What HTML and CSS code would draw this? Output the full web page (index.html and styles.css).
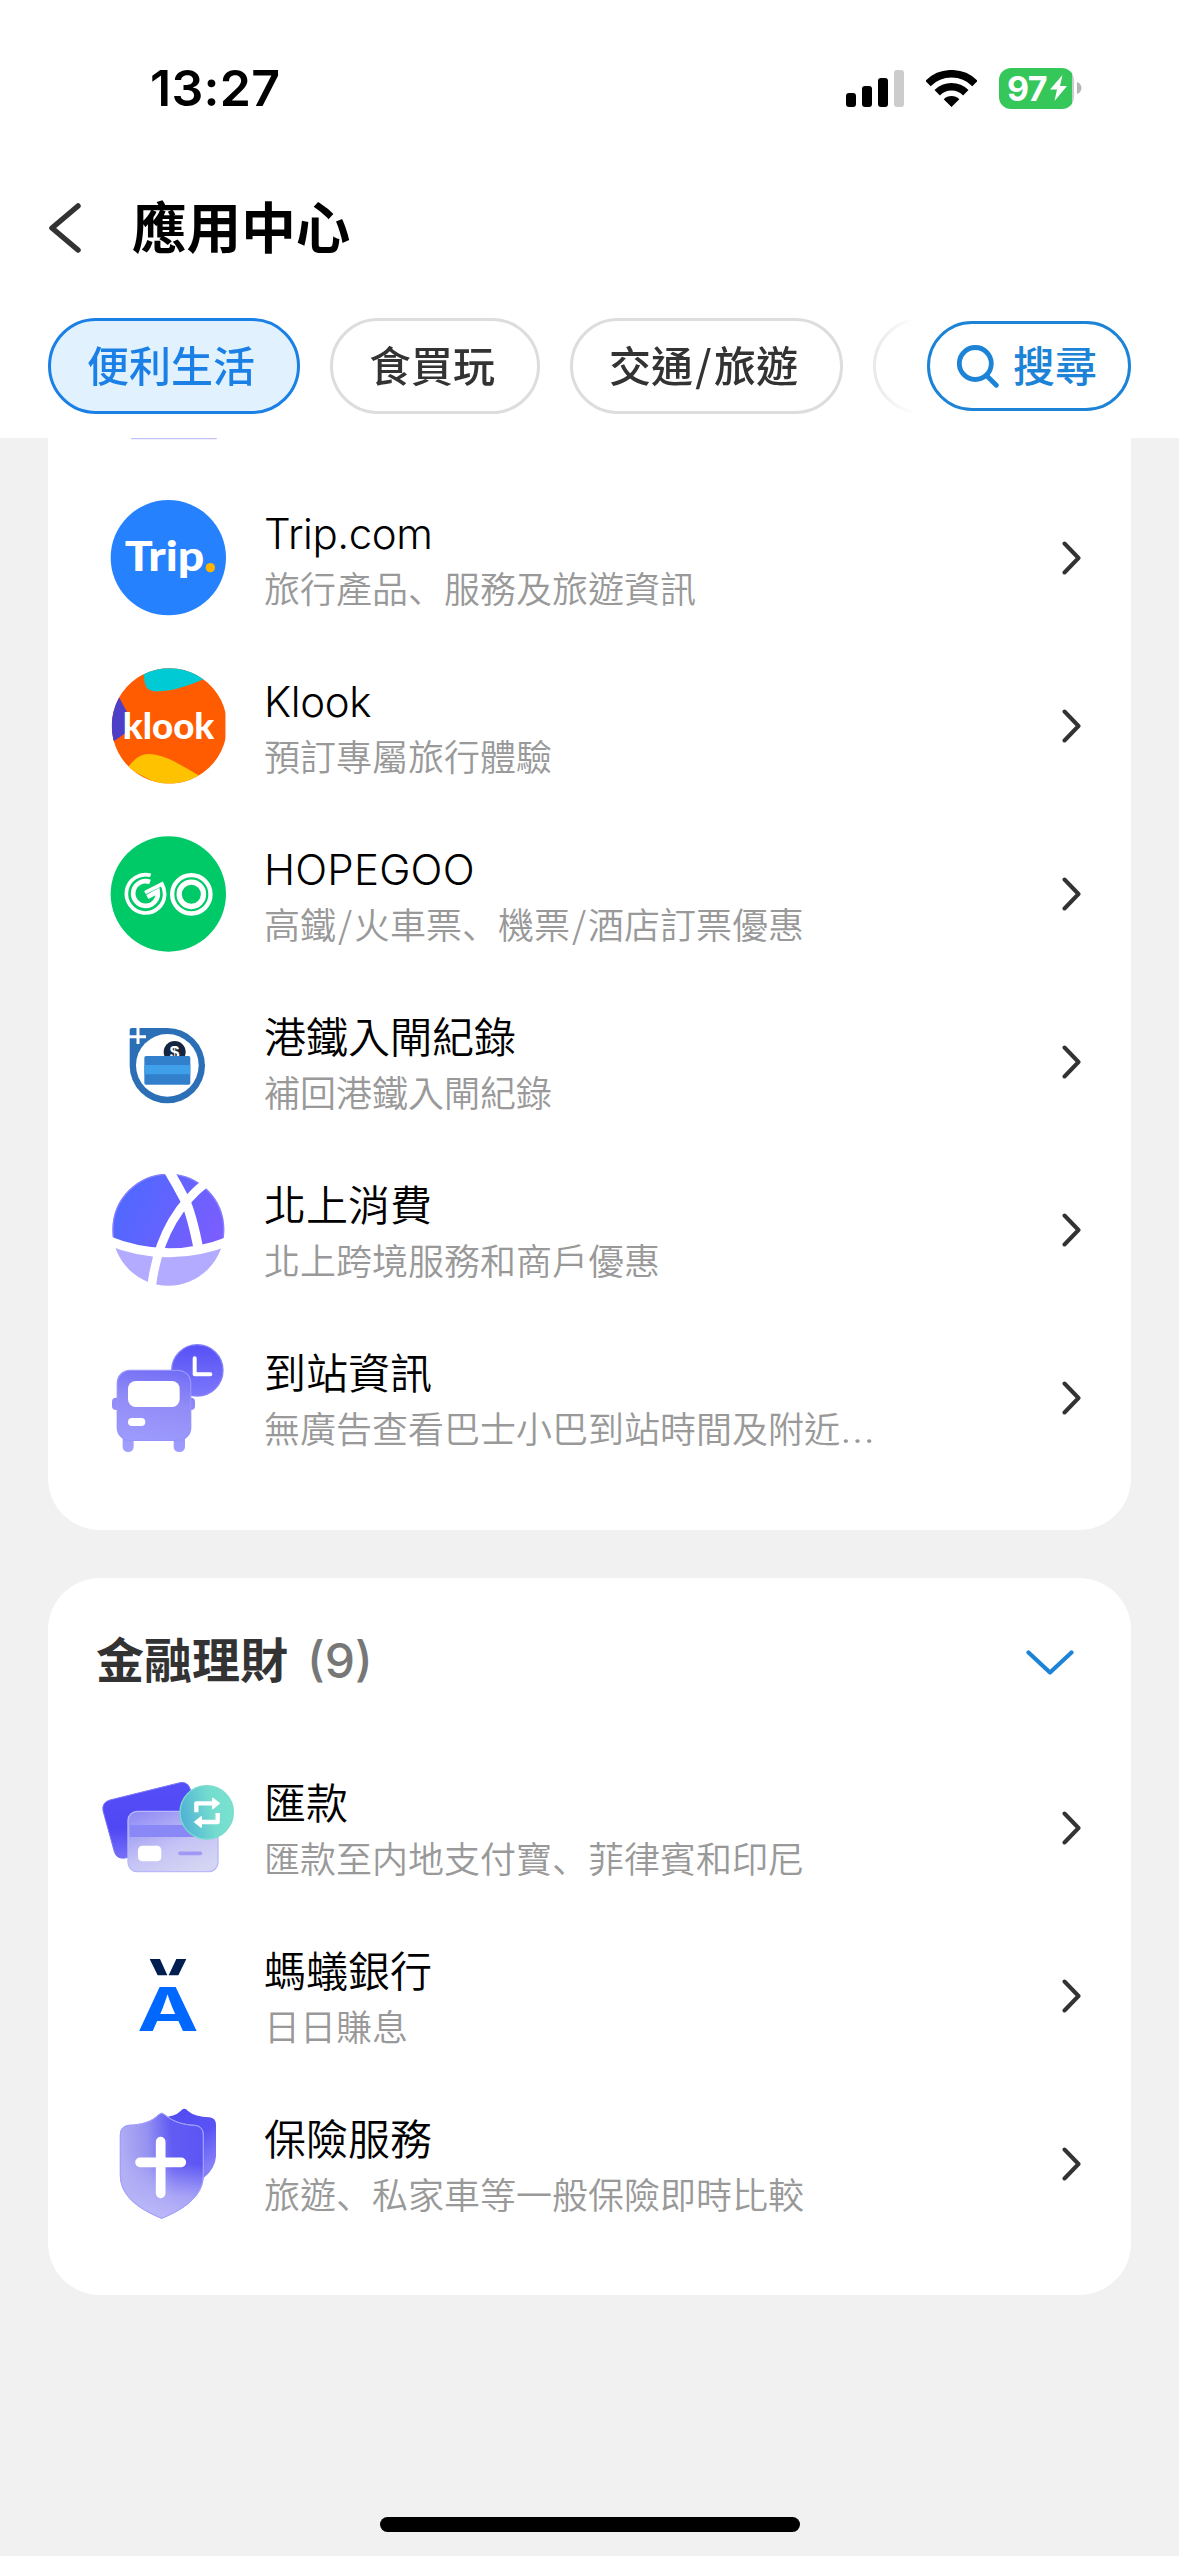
FILE: index.html
```html
<!DOCTYPE html>
<html lang="zh-Hant">
<head>
<meta charset="utf-8">
<title>應用中心</title>
<link rel="stylesheet" href="styles.css">
</head>
<body>
<div class="screen">
  <header class="header">
    <div class="status">
      <span class="clock">13:27</span>
      <div class="status-icons">
        <svg class="signal" viewBox="0 0 58 37"><rect y="23" width="10" height="14" rx="3"/><rect x="16" y="16" width="10" height="21" rx="3"/><rect x="32" y="8" width="10" height="29" rx="3"/><rect x="48" width="10" height="37" rx="3" fill="#ccc"/></svg>
        <svg class="wifi" viewBox="0 0 51 37"><g fill="none" stroke="#000" stroke-width="7.6"><path d="M2 13.5A33.2 33.2 0 0 1 49 13.5"/><path d="M11.2 22.7A20.2 20.2 0 0 1 39.8 22.7"/></g><path d="M17.7 29.2A11 11 0 0 1 33.3 29.2L25.5 37Z"/></svg>
        <div class="battery">
          <span class="battery-level">97</span>
          <svg class="bolt" viewBox="0 0 17 26"><path d="M12.5 0L0 14.5H7L4.5 26L17 11H10Z" fill="#fff"/></svg>
        </div>
        <svg class="nub" viewBox="0 0 5 12"><path d="M0 0C6 2 6 10 0 12Z" fill="#b5b5b5"/></svg>
      </div>
    </div>
    <div class="titlebar">
      <svg class="back" viewBox="0 0 32 50"><path d="M29 3L3 25L29 47" /></svg>
      <h1 class="title">應用中心</h1>
    </div>
    <nav class="tabs">
      <div class="tab-scroll">
        <span class="tab tab-active">便利生活</span>
        <span class="tab">食買玩</span>
        <span class="tab">交通<span class="slash">/</span>旅遊</span>
        <span class="tab tab-next"></span>
      </div>
      <span class="search">
        <svg class="search-icon" viewBox="0 0 42 43"><circle cx="18.3" cy="18.5" r="16"/><path d="M30 31L39.3 40.3"/></svg>
        搜尋
      </span>
    </nav>
  </header>

  <main class="content">
    <section class="card card-scrolled">
      <div class="peek"></div>
      <div class="row">
        <svg class="icon" viewBox="24 204 420 360"><circle cx="235" cy="383" r="173" fill="#2681ff"/><text class="logo-text" x="104" y="422" font-size="124" textLength="239" lengthAdjust="spacingAndGlyphs">Trip</text><circle cx="361" cy="413" r="14" fill="#ffb400"/></svg>
        <div class="text"><span class="name tight">Trip.com</span><span class="desc">旅行產品<span class="pause" lang="zh-Hans">、</span>服務及旅遊資訊</span></div>
        <svg class="go" viewBox="0 0 20 34"><path d="M2.5 2.5L16.5 17L2.5 31.5"/></svg>
      </div>
      <div class="row">
        <svg class="icon" viewBox="24 708 420 360"><clipPath id="klook"><path d="M407 850V925A173 173 0 1 1 407 850Z"/></clipPath><g clip-path="url(#klook)"><rect x="60" y="710" width="350" height="355" fill="#ff5b00"/><path d="M161 700V730C163 778 175 786 210 784C255 781 300 765 345 746L370 700Z" fill="#00cbd4"/><path d="M87 802L113 850L106 910L68 936L50 850Z" fill="#4e3fc8"/><path d="M112 1014C145 972 165 967 200 975C245 984 290 1017 330 1038L240 1080Z" fill="#ffc200"/></g><text class="logo-text" x="98" y="928" font-size="109" textLength="275" lengthAdjust="spacingAndGlyphs">klook</text></svg>
        <div class="text"><span class="name tight">Klook</span><span class="desc">預訂專屬旅行體驗</span></div>
        <svg class="go" viewBox="0 0 20 34"><path d="M2.5 2.5L16.5 17L2.5 31.5"/></svg>
      </div>
      <div class="row">
        <svg class="icon" viewBox="24 102 420 360"><circle cx="235" cy="282" r="173" fill="#00c968"/><g fill="none" stroke="#fff"><circle cx="304" cy="283" r="57.5" stroke-width="13"/><circle cx="304" cy="283" r="36.5" stroke-width="16"/><path d="M182 226A57.5 57.5 0 1 0 224 283Q224 266 216 252L165 278" stroke-width="11"/><path d="M180 246A37 37 0 1 0 203 274L172 291" stroke-width="14"/></g></svg>
        <div class="text"><span class="name wide">HOPEGOO</span><span class="desc">高鐵<span class="slash-sm">/</span>火車票<span class="pause" lang="zh-Hans">、</span>機票<span class="slash-sm">/</span>酒店訂票優惠</span></div>
        <svg class="go" viewBox="0 0 20 34"><path d="M2.5 2.5L16.5 17L2.5 31.5"/></svg>
      </div>
      <div class="row">
        <svg class="icon" viewBox="24 606 420 360"><path d="M119 690Q119 684 125 684H232A113 113 0 1 1 119 797Z" fill="#2b6fb7"/><circle cx="232" cy="796" r="94" fill="#fff"/><path d="M117 710H168M144 682V732" stroke="#fff" stroke-width="9"/><circle cx="254" cy="756" r="33" fill="#15253f"/><text class="coin" x="254" y="774" font-size="52">$</text><rect x="163" y="768" width="138" height="86" rx="5" fill="#3280cb"/><path d="M163 795H301V823H163Z" fill="#3f9fe8"/></svg>
        <div class="text"><span class="name">港鐵入閘紀錄</span><span class="desc">補回港鐵入閘紀錄</span></div>
        <svg class="go" viewBox="0 0 20 34"><path d="M2.5 2.5L16.5 17L2.5 31.5"/></svg>
      </div>
      <div class="row">
        <svg class="icon" viewBox="24 60 420 360"><defs><linearGradient id="globe" x1="0" y1=".2" x2="1" y2=".7"><stop stop-color="#4c69ff"/><stop offset="1" stop-color="#805cff"/></linearGradient><clipPath id="globeTop"><path d="M50 60H420V271Q235 340 50 268Z"/></clipPath></defs><circle cx="235" cy="239" r="168" fill="#b3abff"/><g clip-path="url(#globeTop)"><circle cx="235" cy="239" r="166" fill="url(#globe)" stroke="#8480ff" stroke-width="4"/></g><g fill="none" stroke="#fff" stroke-width="27"><path d="M50 270Q235 346 420 272"/><path d="M236 62Q262 105 284 148Q306 196 326 300" stroke-width="29"/><path d="M350 96C268 160 202 260 184 415" stroke-width="26"/></g></svg>
        <div class="text"><span class="name">北上消費</span><span class="desc">北上跨境服務和商戶優惠</span></div>
        <svg class="go" viewBox="0 0 20 34"><path d="M2.5 2.5L16.5 17L2.5 31.5"/></svg>
      </div>
      <div class="row">
        <svg class="icon" viewBox="24 564 420 360"><defs><linearGradient id="clockFill" x1="0" y1="0" x2="0" y2="1"><stop stop-color="#5750f6"/><stop offset="1" stop-color="#7d78fb"/></linearGradient><linearGradient id="bus" gradientUnits="userSpaceOnUse" x1="220" y1="660" x2="180" y2="905"><stop stop-color="#736ff6"/><stop offset=".4" stop-color="#918cf6"/><stop offset="1" stop-color="#a09eff"/></linearGradient></defs><circle cx="322" cy="661" r="77" fill="url(#clockFill)" stroke="#8581fa" stroke-width="4"/><path d="M314 625V673H361" fill="none" stroke="#fff" stroke-width="12" stroke-linecap="round" stroke-linejoin="round"/><g fill="url(#bus)"><rect x="66" y="743" width="249" height="37" rx="12"/><rect x="98" y="840" width="33" height="66" rx="16"/><rect x="251" y="840" width="34" height="66" rx="16"/><rect x="82" y="661" width="220" height="210" rx="38" stroke="#9693fb" stroke-width="4"/></g><rect x="114" y="693" width="155" height="78" rx="23" fill="#fff"/><rect x="114" y="804" width="52" height="24" rx="12" fill="#fff"/></svg>
        <div class="text"><span class="name">到站資訊</span><span class="desc">無廣告查看巴士小巴到站時間及附近<span class="more">…</span></span></div>
        <svg class="go" viewBox="0 0 20 34"><path d="M2.5 2.5L16.5 17L2.5 31.5"/></svg>
      </div>
    </section>

    <section class="card">
      <div class="card-head">
        <h2 class="card-title">金融理財</h2><span class="count">(9)</span>
        <svg class="fold" viewBox="0 0 48 26"><path d="M2.5 2.5L24 22.5L45.5 2.5"/></svg>
      </div>
      <div class="row">
        <svg class="icon" viewBox="54 84 420 360"><defs><linearGradient id="cardBack" x1="0" y1="0" x2="0" y2="1"><stop stop-color="#554ff8"/><stop offset=".6" stop-color="#4f47f3"/><stop offset="1" stop-color="#7770f8"/></linearGradient><linearGradient id="cardFront" x1=".1" y1="0" x2=".7" y2="1"><stop stop-color="#8f8bf6"/><stop offset=".6" stop-color="#c5c3f5"/><stop offset="1" stop-color="#d3d5f3"/></linearGradient><linearGradient id="teal" x1="0" y1=".6" x2="1" y2=".4"><stop stop-color="#50b0d5"/><stop offset=".6" stop-color="#74dccf"/><stop offset="1" stop-color="#7ae2cf"/></linearGradient></defs><path d="M69 212Q65 187 90 180L300 128Q323 123 331 148L360 300L135 354Q110 358 103 335Z" fill="url(#cardBack)" stroke="#7772fb" stroke-width="3"/><rect x="144" y="214" width="270" height="181" rx="28" fill="url(#cardFront)" stroke="#b9b8fb" stroke-width="4"/><path d="M149 255H413V291H149Z" fill="#8988f6"/><rect x="174" y="317" width="70" height="47" rx="13" fill="#fff"/><path d="M300 340H361" stroke="#a198f5" stroke-width="11" stroke-linecap="round"/><circle cx="380" cy="217" r="80" fill="url(#teal)" stroke="#76dccb" stroke-width="4"/><g fill="none" stroke="#fff" stroke-width="13" stroke-linejoin="round"><path d="M349 217V190H400"/><path d="M413 219V246H362"/></g><path d="M398 175L418 190L398 206ZM364 230L344 246L364 262Z" fill="#fff" stroke="#fff" stroke-width="4" stroke-linejoin="round"/></svg>
        <div class="text"><span class="name">匯款</span><span class="desc">匯款至内地支付寶<span class="pause" lang="zh-Hans">、</span>菲律賓和印尼</span></div>
        <svg class="go" viewBox="0 0 20 34"><path d="M2.5 2.5L16.5 17L2.5 31.5"/></svg>
      </div>
      <div class="row">
        <svg class="icon" viewBox="54 588 420 360"><path d="M209 657H240L262 706H233ZM289 657H319L295 706H266Z" fill="#001e50"/><text class="ant" x="172" y="873" font-size="180" textLength="184" lengthAdjust="spacingAndGlyphs">A</text></svg>
        <div class="text"><span class="name">螞蟻銀行</span><span class="desc">日日賺息</span></div>
        <svg class="go" viewBox="0 0 20 34"><path d="M2.5 2.5L16.5 17L2.5 31.5"/></svg>
      </div>
      <div class="row">
        <svg class="icon" viewBox="54 132 420 360"><defs><linearGradient id="shieldBack" x1="0" y1="0" x2=".6" y2="1"><stop stop-color="#4f48ef"/><stop offset=".6" stop-color="#5a53f4"/><stop offset="1" stop-color="#857ff8"/></linearGradient><linearGradient id="shieldSide" x1="0" y1=".1" x2="1" y2="0"><stop stop-color="#aeacf3"/><stop offset=".3" stop-color="#9693f1"/><stop offset=".6" stop-color="#625bf3"/><stop offset="1" stop-color="#5c55f5"/></linearGradient><linearGradient id="shieldFade" x1=".1" y1="0" x2="0" y2="1"><stop offset=".4" stop-color="#bab7f6" stop-opacity="0"/><stop offset=".72" stop-color="#b5b1f6" stop-opacity=".85"/><stop offset="1" stop-color="#bfbcfb"/></linearGradient></defs><path d="M302 153Q313 139 324 153Q345 171 388 172Q408 174 408 195V290Q406 325 370 355L245 300V172Q285 170 302 153Z" fill="url(#shieldBack)"/><g stroke="#a09efb" stroke-width="3"><path d="M236 164Q245 155 254 164C280 187 315 195 345 196Q370 199 370 225V345C370 410 310 448 245 475C180 448 121 410 121 345V225Q121 199 146 196C180 195 215 187 236 164Z" fill="url(#shieldSide)"/><path d="M236 164Q245 155 254 164C280 187 315 195 345 196Q370 199 370 225V345C370 410 310 448 245 475C180 448 121 410 121 345V225Q121 199 146 196C180 195 215 187 236 164Z" fill="url(#shieldFade)"/></g><path d="M242 245V400M180 307H304" stroke="#fff" stroke-width="29" stroke-linecap="round"/></svg>
        <div class="text"><span class="name">保險服務</span><span class="desc">旅遊<span class="pause" lang="zh-Hans">、</span>私家車等一般保險即時比較</span></div>
        <svg class="go" viewBox="0 0 20 34"><path d="M2.5 2.5L16.5 17L2.5 31.5"/></svg>
      </div>
    </section>
  </main>
  <div class="home-bar"></div>
</div>
</body>
</html>
```
FILE: styles.css
```css
* { box-sizing: border-box; }
body {
  margin: 0;
  background: #f1f1f1;
  font-family: Inter, "Noto Sans CJK TC", sans-serif;
  color: #000;
}
svg { display: block; flex: none; }
.screen {
  width: 1179px;
  height: 2556px;
  display: flex;
  flex-direction: column;
  overflow: hidden;
}
.header { height: 438px; background: #fff; flex: none; }
.status {
  height: 176px;
  padding: 0 97px 0 150px;
  display: flex;
  align-items: center;
  justify-content: space-between;
}
.clock { font-size: 50px; font-weight: 600; line-height: 60px; letter-spacing: 0.3px; }
.status-icons { display: flex; align-items: center; }
.signal { width: 58px; height: 37px; margin-right: 22px; }
.wifi { width: 51px; height: 37px; margin-right: 22px; }
.battery {
  width: 75px;
  height: 41px;
  border-radius: 12px;
  background: linear-gradient(90deg, #35c759 73px, #ccc 73px);
  display: flex;
  align-items: center;
  padding-left: 8px;
  gap: 2px;
}
.battery-level { width: 41px; font-size: 34px; font-weight: 700; line-height: 41px; letter-spacing: -0.6px; color: #fff; }
.bolt { width: 17px; height: 26px; }
.nub { width: 5px; height: 12px; margin-left: 3px; }
.titlebar { height: 104px; padding-left: 49px; display: flex; align-items: center; }
.back { width: 32px; height: 50px; fill: none; stroke: #333; stroke-width: 5.5; stroke-linecap: round; stroke-linejoin: round; }
.title { margin: 0 0 0 51px; font-size: 54.6px; font-weight: 600; line-height: 80px; }
.tabs { height: 96px; margin-top: 38px; padding-left: 48px; display: flex; align-items: center; }
.tab-scroll {
  width: 867px;
  display: flex;
  gap: 30px;
  overflow: hidden;
  -webkit-mask-image: linear-gradient(90deg, #000 805px, transparent 867px);
  mask-image: linear-gradient(90deg, #000 805px, transparent 867px);
}
.tab {
  flex: none;
  height: 96px;
  padding: 1px 42px 0 36px;
  border: 3px solid #ddd;
  border-radius: 48px;
  font-size: 42px;
  font-weight: 500;
  line-height: 90px;
  color: #333;
  white-space: nowrap;
}
.tab-active { border-color: #1a80e5; background: #e1f1fe; color: #1a80e5; }
.tab-next { width: 210px; }
.slash, .slash-sm { display: inline-block; line-height: 0; text-align: center; font-family: "Noto Sans CJK TC", sans-serif; }
.slash { width: 21px; }
.slash-sm { width: 18px; }
.search {
  margin-left: 12px;
  width: 204px;
  height: 90px;
  border: 3px solid #1c83d6;
  border-radius: 45px;
  padding: 1px 0 0 27px;
  display: flex;
  align-items: center;
  gap: 14px;
  font-size: 42px;
  font-weight: 500;
  line-height: 84px;
  color: #1c83d6;
  white-space: nowrap;
}
.search-icon { width: 42px; height: 43px; fill: none; stroke: #1c83d6; stroke-width: 4.8; stroke-linecap: round; }
.content { flex: 1; padding: 0 48px; display: flex; flex-direction: column; gap: 48px; }
.card { background: #fff; border-radius: 52px; padding-bottom: 47px; }
.card-scrolled { border-radius: 0 0 52px 52px; padding-bottom: 48px; }
.peek { height: 36px; padding-left: 83px; }
.peek::before { content: ""; display: block; width: 86px; height: 2px; border-radius: 0 0 2px 2px; background: linear-gradient(#c3c1fb 50%, #f0f0ff 50%); }
.row { height: 168px; padding: 0 49px 0 50px; display: flex; align-items: center; }
.icon { width: 140px; height: 120px; }
.text { flex: 1; margin-left: 26px; padding-top: 4px; display: flex; flex-direction: column; white-space: nowrap; }
.name { height: 60px; font-size: 42px; line-height: 60px; font-weight: 350; }
.tight { letter-spacing: -0.4px; }
.wide { letter-spacing: 0.2px; }
.desc { height: 52px; font-size: 36px; line-height: 52px; font-weight: 350; color: #999; }
.pause { line-height: 0; font-family: "Noto Sans CJK SC", sans-serif; }
.more { display: inline-block; line-height: 0; transform: scaleX(1.15); transform-origin: left; }
.go { width: 20px; height: 34px; fill: none; stroke: #333; stroke-width: 4; stroke-linecap: round; stroke-linejoin: round; }
.card-head { height: 166px; padding: 0 57px 0 48px; display: flex; align-items: center; }
.card-title { margin: 0; font-size: 48px; font-weight: 700; line-height: 70px; color: #333; }
.count { margin-left: 19px; font-size: 48px; line-height: 70px; font-weight: 500; color: #777; }
.fold { width: 48px; height: 26px; margin: 3px 0 0 auto; fill: none; stroke: #1c83d6; stroke-width: 4.2; stroke-linecap: round; stroke-linejoin: round; }
.logo-text { font-family: Lato, sans-serif; font-weight: 900; fill: #fff; }
.coin { font-family: "Liberation Sans", sans-serif; font-weight: 700; fill: #fff; text-anchor: middle; }
.ant { font-family: Inter, sans-serif; font-weight: 650; fill: #0068ff; }
.home-bar { width: 420px; height: 15px; margin: 0 auto 24px; border-radius: 8px; background: #000; }
```
